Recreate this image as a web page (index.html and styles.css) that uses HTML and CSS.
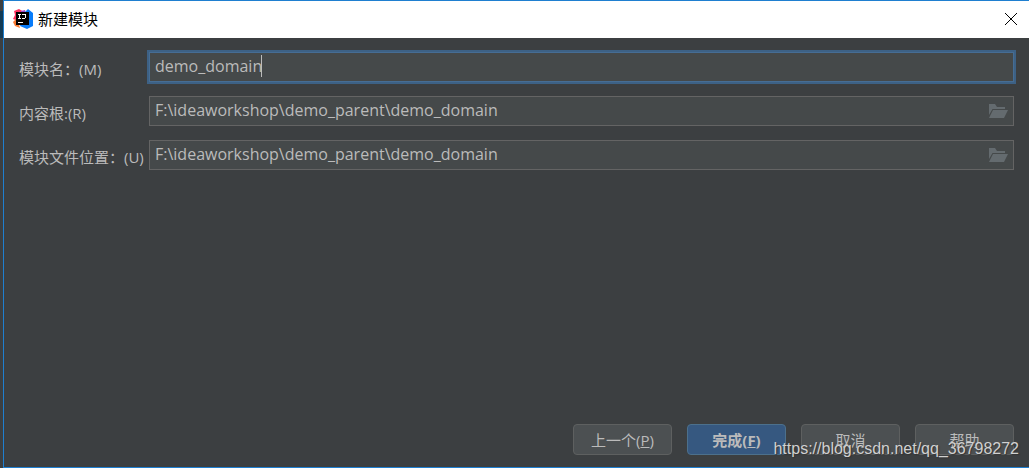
FILE: index.html
```html
<!DOCTYPE html>
<html lang="zh-CN">
<head>
<meta charset="utf-8">
<meta name="viewport" content="width=device-width, initial-scale=1">
<title>新建模块</title>
<link rel="stylesheet" href="styles.css">
</head>
<body>
<svg width="0" height="0" class="symbols" aria-hidden="true">
  <symbol id="folder" viewBox="0 0 20 16">
    <path d="M1 1h6l2 3h8v2H4.500L1 12z"/>
    <path d="M5 7h15l-4 8H1z"/>
  </symbol>
</svg>
<div class="backdrop"></div>
<main class="dialog">
  <header class="titlebar">
    <svg class="logo" viewBox="0 0 20 20" aria-hidden="true">
      <path fill="#fc315f" d="M1 2l5-2 5 3-3 10-8-3 2-4z"/>
      <path fill="#f97a32" d="M0 13l4-4 3 10-5-2z"/>
      <path fill="#9d4ac9" d="M8 2l4-1 1 6H7z"/>
      <path fill="#087cfa" d="M12 3l3-3 5 4v13l-6 3-7-3z"/>
      <path fill="#000" d="M3 3h13v13H3z"/>
      <path fill="none" stroke="#fff" d="M5 5.500h3M6.500 5v5M5 9.500h3M9 5.500h4M12.500 5v4M9 9.500h3M5 13.500h5"/>
    </svg>
    <h1 class="title">新建模块</h1>
    <button class="close" type="button" aria-label="关闭">
      <svg viewBox="0 0 12 12" aria-hidden="true"><path d="M0 0l12 12M12 0L0 12"/></svg>
    </button>
  </header>
  <form class="content">
    <div class="fields">
      <label class="label" for="name">模块名：(M)</label>
      <div class="field focused">
        <input id="name" type="text" value="demo_domain">
        <span class="caret"></span>
      </div>
      <label class="label" for="root">内容根:(R)</label>
      <div class="field">
        <input id="root" type="text" value="F:\ideaworkshop\demo_parent\demo_domain">
        <button class="browse" type="button" aria-label="浏览"><svg aria-hidden="true"><use href="#folder"/></svg></button>
      </div>
      <label class="label" for="location">模块文件位置：(U)</label>
      <div class="field">
        <input id="location" type="text" value="F:\ideaworkshop\demo_parent\demo_domain">
        <button class="browse" type="button" aria-label="浏览"><svg aria-hidden="true"><use href="#folder"/></svg></button>
      </div>
    </div>
    <div class="actions">
      <button class="btn" type="button">上一个(<u>P</u>)</button>
      <button class="btn primary" type="button">完成(<u>F</u>)</button>
      <button class="btn" type="button">取消</button>
      <button class="btn" type="button">帮助</button>
    </div>
  </form>
  <span class="watermark">https://blog.csdn.net/qq_36798272</span>
</main>
</body>
</html>
```

FILE: styles.css
```css
* {
  box-sizing: border-box;
}

body {
  margin: 0;
  display: flex;
  min-height: 100vh;
  background: #3c3f41;
  color: #bbbbbb;
  font-family: "Open Sans", "Noto Sans CJK SC", sans-serif;
  font-size: 15px;
}

.symbols {
  position: absolute;
}

.backdrop {
  width: 3px;
  background: linear-gradient(#3c3f41 11px, #123a55 11px 38px, #3c3f41 38px);
}

.dialog {
  position: relative;
  flex: 1;
  display: flex;
  flex-direction: column;
  border: 1px solid #1f7fd0;
  border-right: 0;
}

.titlebar {
  display: flex;
  align-items: center;
  height: 37px;
  padding: 0 12px 2px 9px;
  background: #fff;
  color: #000;
}

.logo {
  width: 20px;
  height: 20px;
}

.title {
  flex: 1;
  margin: 0 0 0 5px;
  font-size: 15px;
  font-weight: 400;
}

.close {
  display: flex;
  padding: 0;
  border: 0;
  background: none;
}

.close svg {
  width: 12px;
  height: 12px;
  overflow: visible;
  stroke: #000;
}

.content {
  flex: 1;
  display: flex;
  flex-direction: column;
  justify-content: space-between;
  padding: 14px 15px 12px;
}

.fields {
  display: grid;
  grid-template-columns: 130px 1fr;
  row-gap: 14px;
}

.label {
  padding-top: 6px;
  line-height: 22px;
  white-space: nowrap;
}

.field {
  position: relative;
  display: flex;
  align-items: center;
  height: 30px;
  border: 1px solid #646464;
  background: #45494a;
}

.focused {
  border-color: #466d94;
  box-shadow: 0 0 0 2px #3d6185;
}

.field input {
  flex: 1;
  min-width: 0;
  height: 28px;
  padding: 0 5px 2px;
  border: 0;
  outline: 0;
  background: none;
  color: #bbbbbb;
  font: inherit;
  font-size: 16px;
}

.caret {
  position: absolute;
  top: 2px;
  left: 111px;
  width: 1px;
  height: 22px;
  background: #bbbbbb;
}

.browse {
  display: flex;
  padding: 0 5px;
  border: 0;
  background: none;
}

.browse svg {
  width: 20px;
  height: 16px;
  fill: #646b6f;
}

.actions {
  display: flex;
  justify-content: flex-end;
  gap: 15px;
}

.btn {
  width: 99px;
  height: 31px;
  padding: 0;
  border: 1px solid #5e6060;
  border-radius: 4px;
  background: #4c5052;
  color: #bbbbbb;
  font: inherit;
}

.primary {
  border-color: #4c708c;
  background: #365880;
  font-weight: 700;
}

.watermark {
  position: absolute;
  right: 10px;
  bottom: 8px;
  color: #d0d0d0;
  font: 16px/20px "Liberation Sans", sans-serif;
  text-shadow: 1px 1px 1px #333;
}
```
